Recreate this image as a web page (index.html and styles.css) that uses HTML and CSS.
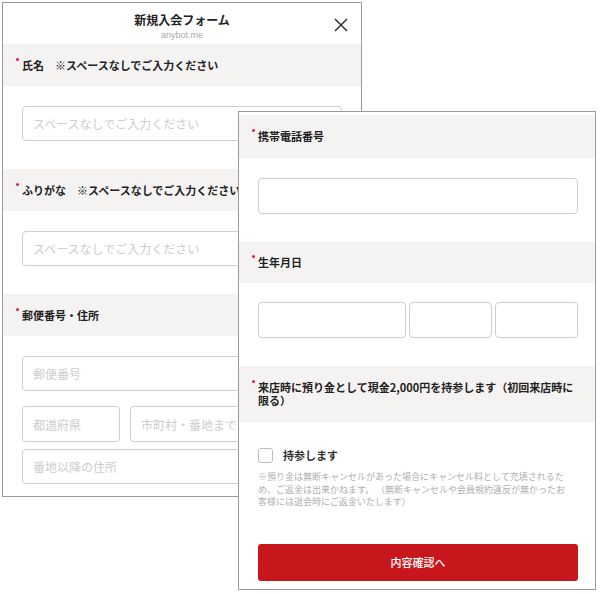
FILE: index.html
```html
<!DOCTYPE html>
<html lang="ja">
<head>
<meta charset="utf-8">
<title>新規入会フォーム</title>
<link rel="stylesheet" href="styles.css">
</head>
<body>
<div class="card card-back">
  <div class="header">
    <div class="title">新規入会フォーム</div>
    <div class="sub">anybot.me</div>
    <svg class="close" viewBox="0 0 14 14" width="14" height="14"><path d="M1 1L13 13M13 1L1 13" stroke="#333" stroke-width="1.5" fill="none"/></svg>
  </div>
  <div class="band"><span class="label nowrap">氏名　※スペースなしでご入力ください</span></div>
  <div class="field">
    <input class="input" placeholder="スペースなしでご入力ください">
  </div>
  <div class="band"><span class="label nowrap">ふりがな　※スペースなしでご入力ください</span></div>
  <div class="field">
    <input class="input" placeholder="スペースなしでご入力ください">
  </div>
  <div class="band"><span class="label">郵便番号・住所</span></div>
  <div class="field field-addr">
    <input class="input" placeholder="郵便番号">
    <div class="addr-row">
      <input class="input input-pref" placeholder="都道府県">
      <input class="input input-city" placeholder="市町村・番地まで">
    </div>
    <input class="input input-rest" placeholder="番地以降の住所">
  </div>
</div>

<div class="card card-front">
  <div class="band band-tall1"><span class="label">携帯電話番号</span></div>
  <div class="field">
    <input class="input input-lg">
  </div>
  <div class="band band-short"><span class="label">生年月日</span></div>
  <div class="field field-date">
    <div class="date-row">
      <input class="input input-lg">
      <input class="input input-lg">
      <input class="input input-lg">
    </div>
  </div>
  <div class="band band-multi"><span class="label">来店時に預り金として現金2,000円を持参します（初回来店時に限る）</span></div>
  <div class="field field-deposit">
    <label class="check-row"><span class="checkbox"></span><span class="check-text">持参します</span></label>
    <p class="note">※預り金は無断キャンセルがあった場合にキャンセル料として充填されるた<br>め、ご返金は出来かねます。 （無断キャンセルや会員規約違反が無かったお<br>客様には退会時にご返金いたします）</p>
    <button class="submit" type="button">内容確認へ</button>
  </div>
</div>
</body>
</html>
```

FILE: styles.css
```css
* {
  box-sizing: border-box;
  margin: 0;
  padding: 0;
}

html, body {
  width: 600px;
  height: 594px;
  overflow: hidden;
  background: #fff;
}

body {
  position: relative;
  font-family: "Noto Sans CJK JP", "Noto Sans", sans-serif;
  color: #222;
}

.card {
  position: absolute;
  background: #fff;
  border: 1px solid #9a9a9a;
  display: flex;
  flex-direction: column;
  overflow: hidden;
}

.card-back {
  left: 2px;
  top: 2px;
  width: 360px;
  height: 495px;
}

.card-front {
  left: 238px;
  top: 111px;
  width: 358px;
  height: 479px;
  padding-top: 3px;
}

.header {
  position: relative;
  height: 41px;
  flex: none;
  display: flex;
  flex-direction: column;
  align-items: center;
  padding-top: 9px;
}

.title {
  font-size: 12px;
  font-weight: 700;
  line-height: 16px;
  color: #222;
}

.sub {
  font-family: "Liberation Sans", "Noto Sans", sans-serif;
  font-size: 9px;
  line-height: 12px;
  margin-top: 1px;
  color: #a8a8a8;
}

.close {
  position: absolute;
  right: 13px;
  top: 15px;
}

.band {
  flex: none;
  background: #f5f3f1;
  height: 42px;
  display: flex;
  align-items: center;
  padding: 0 19px;
}

.band-tall1 { height: 43px; }
.band-short { height: 41px; }

.band-multi {
  height: 56px;
  align-items: flex-start;
  padding-top: 15px;
  padding-right: 17px;
}

.label {
  position: relative;
  font-size: 11px;
  font-weight: 700;
  line-height: 13px;
  color: #222;
}

.nowrap { white-space: nowrap; }

.label::before {
  content: "";
  position: absolute;
  left: -6px;
  top: -1px;
  width: 3px;
  height: 3px;
  border-radius: 50%;
  background: #e3204b;
}

.field {
  flex: none;
  padding: 20px 19px 28px;
}

.card-front .field {
  padding-right: 17px;
}

.card-front .field-date {
  padding-top: 19px;
}

.input {
  display: block;
  width: 100%;
  height: 35px;
  border: 1px solid #cfcfcf;
  border-radius: 4px;
  padding: 0 10px;
  font-family: inherit;
  font-size: 12px;
  color: #222;
  background: #fff;
  outline: none;
}

.input::placeholder {
  color: #cdcdcd;
}

.input-lg {
  height: 36px;
}

.field-addr {
  padding-bottom: 12px;
}

.addr-row {
  display: flex;
  gap: 10px;
  margin-top: 15px;
}

.addr-row .input {
  height: 36px;
}

.input-pref {
  flex: none;
  width: 98px;
}

.input-city {
  flex: 1;
  min-width: 0;
}

.input-rest {
  margin-top: 7px;
}

.date-row {
  display: grid;
  grid-template-columns: 148px 83px 1fr;
  gap: 3px;
}

.card-front .field-deposit {
  padding-top: 26px;
  padding-bottom: 0;
}

.check-row {
  display: flex;
  align-items: center;
  height: 15px;
}

.checkbox {
  flex: none;
  width: 15px;
  height: 15px;
  border: 1px solid #bdbdbd;
  border-radius: 3px;
  background: #fff;
}

.check-text {
  margin-left: 10px;
  font-size: 11px;
  font-weight: 700;
  color: #333;
  line-height: 15px;
}

.note {
  margin-top: 8px;
  font-size: 9px;
  line-height: 12.5px;
  color: #b0b0b0;
  white-space: nowrap;
}

.submit {
  display: block;
  width: 100%;
  height: 37px;
  margin-top: 35px;
  border: none;
  border-radius: 3px;
  background: #c8161d;
  color: #fff;
  font-family: inherit;
  font-size: 11px;
  font-weight: 500;
}
```
